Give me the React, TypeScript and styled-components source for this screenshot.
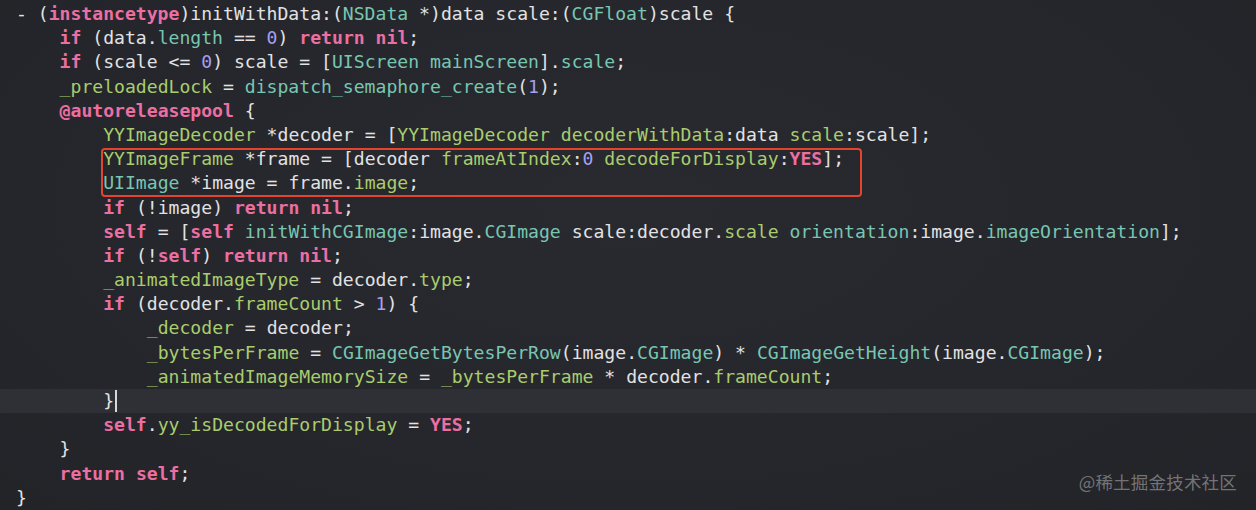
import styled, { createGlobalStyle } from "styled-components";

type Kind = "plain" | "kw" | "num" | "type" | "proj";
type Token = [Kind, string];

const colors: Record<Kind, string> = {
  plain: "#e2e2e4",
  kw: "#ec6fa2",
  num: "#a79ff2",
  type: "#78c6b2",
  proj: "#a9cd6e",
};

const lines: { indent: number; tokens: Token[]; current?: boolean }[] = [
  {
    indent: 0,
    tokens: [
      ["plain", "- ("],
      ["kw", "instancetype"],
      ["plain", ")initWithData:("],
      ["type", "NSData"],
      ["plain", " *)data scale:("],
      ["type", "CGFloat"],
      ["plain", ")scale {"],
    ],
  },
  {
    indent: 4,
    tokens: [
      ["kw", "if"],
      ["plain", " (data."],
      ["type", "length"],
      ["plain", " == "],
      ["num", "0"],
      ["plain", ") "],
      ["kw", "return"],
      ["plain", " "],
      ["kw", "nil"],
      ["plain", ";"],
    ],
  },
  {
    indent: 4,
    tokens: [
      ["kw", "if"],
      ["plain", " (scale <= "],
      ["num", "0"],
      ["plain", ") scale = ["],
      ["type", "UIScreen"],
      ["plain", " "],
      ["type", "mainScreen"],
      ["plain", "]."],
      ["type", "scale"],
      ["plain", ";"],
    ],
  },
  {
    indent: 4,
    tokens: [
      ["proj", "_preloadedLock"],
      ["plain", " = "],
      ["type", "dispatch_semaphore_create"],
      ["plain", "("],
      ["num", "1"],
      ["plain", ");"],
    ],
  },
  { indent: 4, tokens: [["kw", "@autoreleasepool"], ["plain", " {"]] },
  {
    indent: 8,
    tokens: [
      ["proj", "YYImageDecoder"],
      ["plain", " *decoder = ["],
      ["proj", "YYImageDecoder"],
      ["plain", " "],
      ["proj", "decoderWithData"],
      ["plain", ":data "],
      ["proj", "scale"],
      ["plain", ":scale];"],
    ],
  },
  {
    indent: 8,
    tokens: [
      ["proj", "YYImageFrame"],
      ["plain", " *frame = [decoder "],
      ["proj", "frameAtIndex"],
      ["plain", ":"],
      ["num", "0"],
      ["plain", " "],
      ["proj", "decodeForDisplay"],
      ["plain", ":"],
      ["kw", "YES"],
      ["plain", "];"],
    ],
  },
  {
    indent: 8,
    tokens: [
      ["type", "UIImage"],
      ["plain", " *image = frame."],
      ["proj", "image"],
      ["plain", ";"],
    ],
  },
  {
    indent: 8,
    tokens: [
      ["kw", "if"],
      ["plain", " (!image) "],
      ["kw", "return"],
      ["plain", " "],
      ["kw", "nil"],
      ["plain", ";"],
    ],
  },
  {
    indent: 8,
    tokens: [
      ["kw", "self"],
      ["plain", " = ["],
      ["kw", "self"],
      ["plain", " "],
      ["type", "initWithCGImage"],
      ["plain", ":image."],
      ["type", "CGImage"],
      ["plain", " scale:decoder."],
      ["proj", "scale"],
      ["plain", " "],
      ["type", "orientation"],
      ["plain", ":image."],
      ["type", "imageOrientation"],
      ["plain", "];"],
    ],
  },
  {
    indent: 8,
    tokens: [
      ["kw", "if"],
      ["plain", " (!"],
      ["kw", "self"],
      ["plain", ") "],
      ["kw", "return"],
      ["plain", " "],
      ["kw", "nil"],
      ["plain", ";"],
    ],
  },
  {
    indent: 8,
    tokens: [
      ["proj", "_animatedImageType"],
      ["plain", " = decoder."],
      ["proj", "type"],
      ["plain", ";"],
    ],
  },
  {
    indent: 8,
    tokens: [
      ["kw", "if"],
      ["plain", " (decoder."],
      ["proj", "frameCount"],
      ["plain", " > "],
      ["num", "1"],
      ["plain", ") {"],
    ],
  },
  { indent: 12, tokens: [["proj", "_decoder"], ["plain", " = decoder;"]] },
  {
    indent: 12,
    tokens: [
      ["proj", "_bytesPerFrame"],
      ["plain", " = "],
      ["type", "CGImageGetBytesPerRow"],
      ["plain", "(image."],
      ["type", "CGImage"],
      ["plain", ") * "],
      ["type", "CGImageGetHeight"],
      ["plain", "(image."],
      ["type", "CGImage"],
      ["plain", ");"],
    ],
  },
  {
    indent: 12,
    tokens: [
      ["proj", "_animatedImageMemorySize"],
      ["plain", " = "],
      ["proj", "_bytesPerFrame"],
      ["plain", " * decoder."],
      ["proj", "frameCount"],
      ["plain", ";"],
    ],
  },
  { indent: 8, tokens: [["plain", "}"]], current: true },
  {
    indent: 8,
    tokens: [
      ["kw", "self"],
      ["plain", "."],
      ["proj", "yy_isDecodedForDisplay"],
      ["plain", " = "],
      ["kw", "YES"],
      ["plain", ";"],
    ],
  },
  { indent: 4, tokens: [["plain", "}"]] },
  {
    indent: 4,
    tokens: [
      ["kw", "return"],
      ["plain", " "],
      ["kw", "self"],
      ["plain", ";"],
    ],
  },
  { indent: 0, tokens: [["plain", "}"]] },
];

const GlobalStyle = createGlobalStyle`
  html, body {
    margin: 0;
    padding: 0;
    background: #26272c;
  }
`;

const Editor = styled.div`
  position: relative;
  width: 1256px;
  height: 510px;
  overflow: hidden;
  background: radial-gradient(ellipse at 50% 40%, #292a2f 0%, #25262b 70%, #232428 100%);
  padding-top: 2px;
  box-sizing: border-box;
`;

const Code = styled.div`
  display: flex;
  flex-direction: column;
  font-family: "DejaVu Sans Mono", "Liberation Mono", monospace;
  font-size: 18.1px;
  line-height: 24.2px;
  white-space: pre;
`;

const Line = styled.div<{ $indent: number; $current?: boolean }>`
  height: 24.2px;
  padding-left: ${(p) => 16 + p.$indent * 10.9}px;
  background: ${(p) => (p.$current ? "#2e3035" : "transparent")};
  display: flex;
  align-items: center;
`;

const Tok = styled.span<{ $kind: Kind }>`
  color: ${(p) => colors[p.$kind]};
  font-weight: ${(p) => (p.$kind === "kw" ? 700 : 400)};
`;

const Caret = styled.span`
  display: inline-block;
  width: 1.5px;
  height: 22px;
  margin-left: 1px;
  background: #d8d8da;
`;

const Marker = styled.div`
  position: absolute;
  left: 101px;
  top: 148px;
  width: 761px;
  height: 49px;
  box-sizing: border-box;
  border: 2px solid #e2442c;
  border-radius: 4px;
`;

const Watermark = styled.div`
  position: absolute;
  right: 19px;
  bottom: 16px;
  font-family: "Noto Sans CJK SC", "Noto Sans", sans-serif;
  font-size: 17.5px;
  color: rgba(170, 170, 172, 0.6);
  letter-spacing: 0.2px;
`;

export default function App() {
  return (
    <>
      <GlobalStyle />
      <Editor>
        <Code>
          {lines.map((line, i) => (
            <Line key={i} $indent={line.indent} $current={line.current}>
              {line.tokens.map(([kind, text], j) => (
                <Tok key={j} $kind={kind}>
                  {text}
                </Tok>
              ))}
              {line.current && <Caret />}
            </Line>
          ))}
        </Code>
        <Marker />
        <Watermark>@稀土掘金技术社区</Watermark>
      </Editor>
    </>
  );
}
